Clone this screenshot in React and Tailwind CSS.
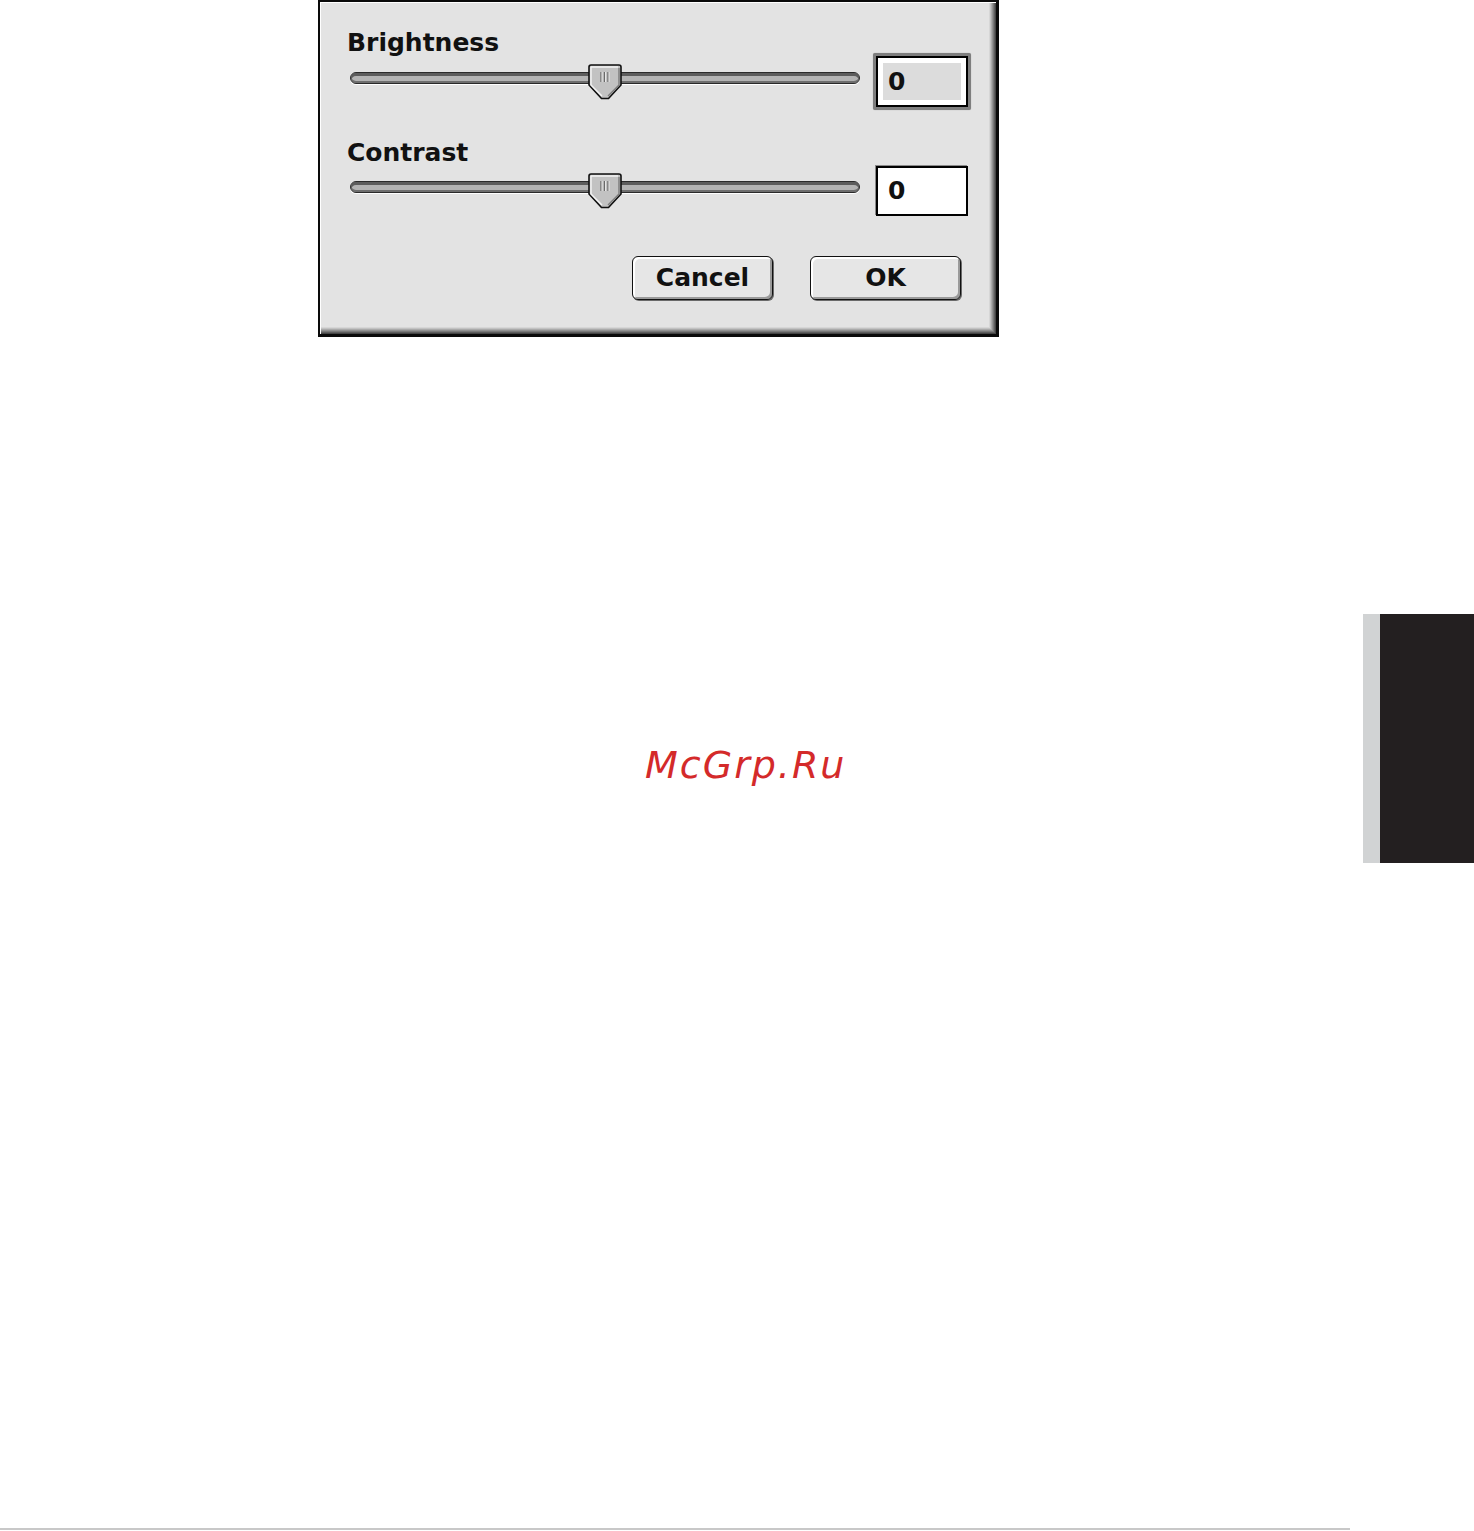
import React from "react";

const font = { fontFamily: '"DejaVu Sans", Verdana, sans-serif' };

const Thumb = () => (
  <svg width="34" height="36" viewBox="0 0 34 36" className="absolute top-0 left-[238px]">
    <path d="M3 1 H31 Q33 1 33 3 V21 L20.5 34.5 H13.5 L1 21 V3 Q1 1 3 1 Z" fill="#c2c2c2" stroke="#111" strokeWidth="1.6" />
    <path d="M3 3 H30 M3 3 V21 L14 32" fill="none" stroke="#f4f4f4" strokeWidth="1.4" />
    <path d="M31 4 V21 L20 32" fill="none" stroke="#7a7a7a" strokeWidth="1.4" />
    <path d="M13 8 V18 M16.5 8 V18 M20 8 V18" stroke="#6a6a6a" strokeWidth="1.3" />
    <path d="M14 8 V18 M17.5 8 V18 M21 8 V18" stroke="#f2f2f2" strokeWidth="0.8" />
  </svg>
);

const Slider = () => (
  <div className="relative ml-[3px] h-[36px] w-[510px] pt-[8px]">
    <div className="h-[12px] w-full rounded-full border border-[#2a2a2a] bg-[#b3b3b3] shadow-[inset_0_3px_0_#5c5c5c,inset_0_-2px_0_#6e6e6e,0_1px_0_#ffffff]" />
    <Thumb />
  </div>
);

const Label = ({ children, top }) => (
  <div className={`${top} h-[29px] text-[25px] font-bold leading-[29px] text-[#111]`}>{children}</div>
);

const Button = ({ children, width }) => (
  <button
    className={`${width} flex h-[44px] items-center justify-center rounded-[6px] border border-[#111] bg-[#e6e6e6] text-[25px] font-bold text-[#111] shadow-[inset_2px_2px_0_#ffffff,inset_-2px_-2px_0_#9a9a9a,1px_1px_0_#6a6a6a]`}
    style={font}
  >
    {children}
  </button>
);

const App = () => {
  return (
    <div className="relative flex h-[1531px] w-[1474px] flex-col bg-white" style={font}>
      {/* dialog */}
      <div className="ml-[318px] h-[337px] w-[681px] border-t-2 border-r-[3px] border-b-[3px] border-l-2 border-[#0a0a0a]">
        <div className="h-full w-full bg-[#e3e3e3] pl-[27px] shadow-[inset_1px_1px_0_#ffffff,inset_-1px_-1px_0_#444,inset_-2px_-2px_0_#5e5e5e,inset_-3px_-3px_0_#787878,inset_-4px_-4px_0_#919191,inset_-5px_-5px_0_#aaaaaa,inset_-6px_-6px_0_#c2c2c2,inset_-7px_-7px_0_#d6d6d6]">
          <div className="flex items-start">
            <div className="w-[514px]">
              <Label top="mt-[26px]">Brightness</Label>
              <div className="mt-[7px]">
                <Slider />
              </div>
            </div>
            <div className="ml-[12px] mt-[51px] h-[57px] w-[98px] rounded-[2px] bg-[#7e7e7e] p-[3px] shadow-[0_0_1px_#9a9a9a]">
              <div className="h-full w-full border-2 border-black bg-white p-[5px]">
                <div className="flex h-full items-center bg-[#dcdcdc] pl-[5px] text-[25px] font-bold text-[#111]">0</div>
              </div>
            </div>
          </div>

          <div className="flex items-start">
            <div className="w-[514px]">
              <Label top="mt-[28px]">Contrast</Label>
              <div className="mt-[6px]">
                <Slider />
              </div>
            </div>
            <div className="ml-[15px] mt-[56px] flex h-[50px] w-[92px] items-center border-2 border-black bg-white pl-[10px] text-[25px] font-bold text-[#111] shadow-[-1px_-1px_0_#8a8a8a]">
              0
            </div>
          </div>

          <div className="ml-[285px] mt-[40px] flex gap-[37px]">
            <Button width="w-[141px]">Cancel</Button>
            <Button width="w-[151px]">OK</Button>
          </div>
        </div>
      </div>

      {/* side tab */}
      <div className="mt-[277px] flex justify-end">
        <div className="h-[249px] w-[17px] bg-[#d1d3d4]" />
        <div className="h-[249px] w-[94px] bg-[#231f20]" />
      </div>

      {/* watermark */}
      <div className="absolute left-[645px] top-[742px] text-[38px] italic leading-[46px] tracking-[2px] text-[#d42a2a]">
        McGrp.Ru
      </div>

      {/* footer rule */}
      <div className="mt-auto mb-[1px] h-[2px] w-[1350px] bg-[#c8c8c8]" />
    </div>
  );
};

export default App;
